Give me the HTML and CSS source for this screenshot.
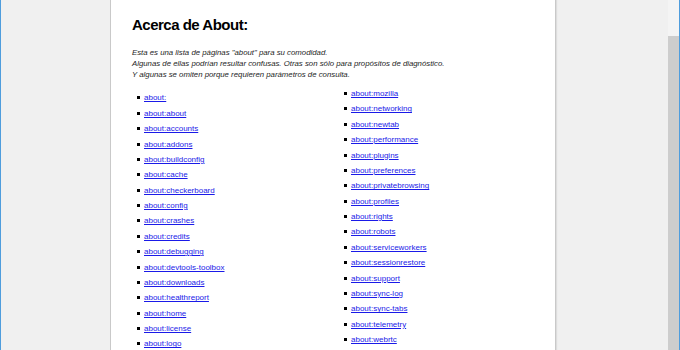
FILE: index.html
```html
<!DOCTYPE html>
<html>
<head>
    <title>Acerca de About</title>
    <meta charset="utf-8">
    <link rel="stylesheet" href="styles.css">
</head>
<body>
    <div class="window">
        <div class="viewport">
            <div class="page">
                <h1>Acerca de About:</h1>
                <p class="intro">
                    Esta es una lista de páginas "about" para su comodidad.<br>
                    Algunas de ellas podrían resultar confusas. Otras son sólo para propósitos de diagnóstico.<br>
                    Y algunas se omiten porque requieren parámetros de consulta.
                </p>
                <div class="columns">
                    <ul class="col first">
                        <li><a href="#">about:</a></li>
                        <li><a href="#">about:about</a></li>
                        <li><a href="#">about:accounts</a></li>
                        <li><a href="#">about:addons</a></li>
                        <li><a href="#">about:buildconfig</a></li>
                        <li><a href="#">about:cache</a></li>
                        <li><a href="#">about:checkerboard</a></li>
                        <li><a href="#">about:config</a></li>
                        <li><a href="#">about:crashes</a></li>
                        <li><a href="#">about:credits</a></li>
                        <li><a href="#">about:debugging</a></li>
                        <li><a href="#">about:devtools-toolbox</a></li>
                        <li><a href="#">about:downloads</a></li>
                        <li><a href="#">about:healthreport</a></li>
                        <li><a href="#">about:home</a></li>
                        <li><a href="#">about:license</a></li>
                        <li><a href="#">about:logo</a></li>
                    </ul>
                    <ul class="col">
                        <li><a href="#">about:mozilla</a></li>
                        <li><a href="#">about:networking</a></li>
                        <li><a href="#">about:newtab</a></li>
                        <li><a href="#">about:performance</a></li>
                        <li><a href="#">about:plugins</a></li>
                        <li><a href="#">about:preferences</a></li>
                        <li><a href="#">about:privatebrowsing</a></li>
                        <li><a href="#">about:profiles</a></li>
                        <li><a href="#">about:rights</a></li>
                        <li><a href="#">about:robots</a></li>
                        <li><a href="#">about:serviceworkers</a></li>
                        <li><a href="#">about:sessionrestore</a></li>
                        <li><a href="#">about:support</a></li>
                        <li><a href="#">about:sync-log</a></li>
                        <li><a href="#">about:sync-tabs</a></li>
                        <li><a href="#">about:telemetry</a></li>
                        <li><a href="#">about:webrtc</a></li>
                    </ul>
                </div>
            </div>
        </div>
        <div class="scrollbar"><div class="thumb"></div></div>
    </div>
</body>
</html>
```

FILE: styles.css
```css
html, body {
    margin: 0;
    padding: 0;
    height: 100%;
    overflow: hidden;
}
body {
    font-family: "Liberation Sans", Arial, sans-serif;
    background: #f0f0f0;
}
.window {
    display: flex;
    height: 350px;
    border-left: 1px solid #4f9ddd;
    border-right: 1px solid #4f9ddd;
    box-sizing: border-box;
    overflow: hidden;
}
.viewport {
    flex: 1;
    overflow: hidden;
}
.page {
    width: 446px;
    margin-left: 109px;
    height: 400px;
    padding: 16px 21px 0;
    box-sizing: border-box;
    background: #fff;
    border-left: 1px solid #c9c9c9;
    border-right: 1px solid #c9c9c9;
    box-shadow: 1px 0 1px rgba(0,0,0,0.08);
}
h1 {
    margin: 0;
    font-size: 15px;
    line-height: 18px;
    letter-spacing: -0.5px;
    font-weight: bold;
    color: #000;
}
.intro {
    margin: 13px 0 0;
    font-size: 7.8px;
    line-height: 11px;
    font-style: italic;
    color: #1e1e1e;
}
.columns {
    display: flex;
    align-items: flex-start;
    margin-top: 6px;
}
.col {
    flex: 0 0 207px;
    margin: 0;
    padding-left: 12px;
    box-sizing: border-box;
    list-style: none;
    font-size: 8px;
    line-height: 15.375px;
}
.col.first { margin-top: 4.4px; }
.col li::before {
    content: "";
    display: inline-block;
    width: 3px;
    height: 3px;
    background: #000;
    margin-left: -7px;
    margin-right: 4px;
    vertical-align: 1px;
}
.col a { color: #1a1ae8; }
.scrollbar {
    width: 11px;
    background: #f4f4f4;
    display: flex;
    flex-direction: column;
}
.thumb {
    margin-top: 36px;
    flex: 1;
    background: #cdcdcd;
}
```
